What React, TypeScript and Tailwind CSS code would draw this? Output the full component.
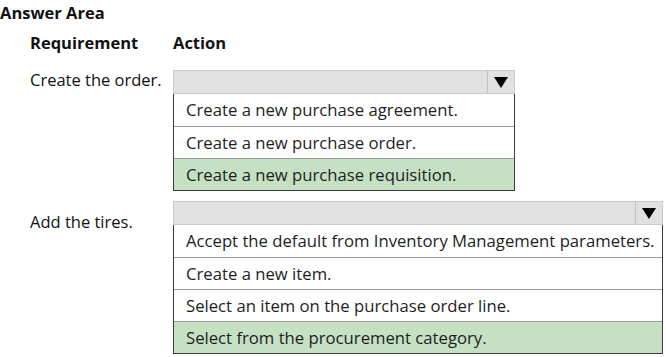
import React from 'react';

const font = { fontFamily: '"Open Sans", "Noto Sans", sans-serif' };

function Dropdown({ width, options, selected }: { width: string; options: string[]; selected: number }) {
  return (
    <div className={width}>
      <div className="flex h-[24px] border border-[#c9c9c9] bg-[#e1e1e1]">
        <div className="flex-1" />
        <div className="flex w-[27px] items-center justify-center border-l border-[#c2c2c2]">
          <svg width="14" height="11" viewBox="0 0 14 11">
            <path d="M0 0 H14 L7 11 Z" fill="#000" />
          </svg>
        </div>
      </div>
      <div className="border border-t-0 border-[#3a3a3a]">
        {options.map((o, i) => (
          <div
            key={o}
            className={
              'flex h-[32px] items-center pl-[12px] text-[16.7px] text-[#1e1e1e] ' +
              (i > 0 ? 'border-t border-[#9a9a9a] ' : '') +
              (i === selected ? 'bg-[#c5e0c3]' : 'bg-white')
            }
          >
            {o}
          </div>
        ))}
      </div>
    </div>
  );
}

export default function App() {
  return (
    <div className="h-[357px] w-[666px] bg-white text-[#111]" style={font}>
      <div className="pt-[1px] text-[16.5px] font-bold leading-[24px]">Answer Area</div>
      <div className="grid grid-cols-[143px_auto] pl-[30px]">
        <div className="mt-[6px] text-[16.5px] font-bold leading-[24px]">Requirement</div>
        <div className="mt-[6px] text-[16.5px] font-bold leading-[24px]">Action</div>

        <div className="mt-[15px] text-[16.5px] leading-[20px]">Create the order.</div>
        <div className="mt-[15px]">
          <Dropdown
            width="w-[342px]"
            selected={2}
            options={['Create a new purchase agreement.', 'Create a new purchase order.', 'Create a new purchase requisition.']}
          />
        </div>

        <div className="mt-[16px] text-[16.5px] leading-[30px]">Add the tires.</div>
        <div className="mt-[10px]">
          <Dropdown
            width="w-[490px]"
            selected={3}
            options={[
              'Accept the default from Inventory Management parameters.',
              'Create a new item.',
              'Select an item on the purchase order line.',
              'Select from the procurement category.',
            ]}
          />
        </div>
      </div>
    </div>
  );
}
